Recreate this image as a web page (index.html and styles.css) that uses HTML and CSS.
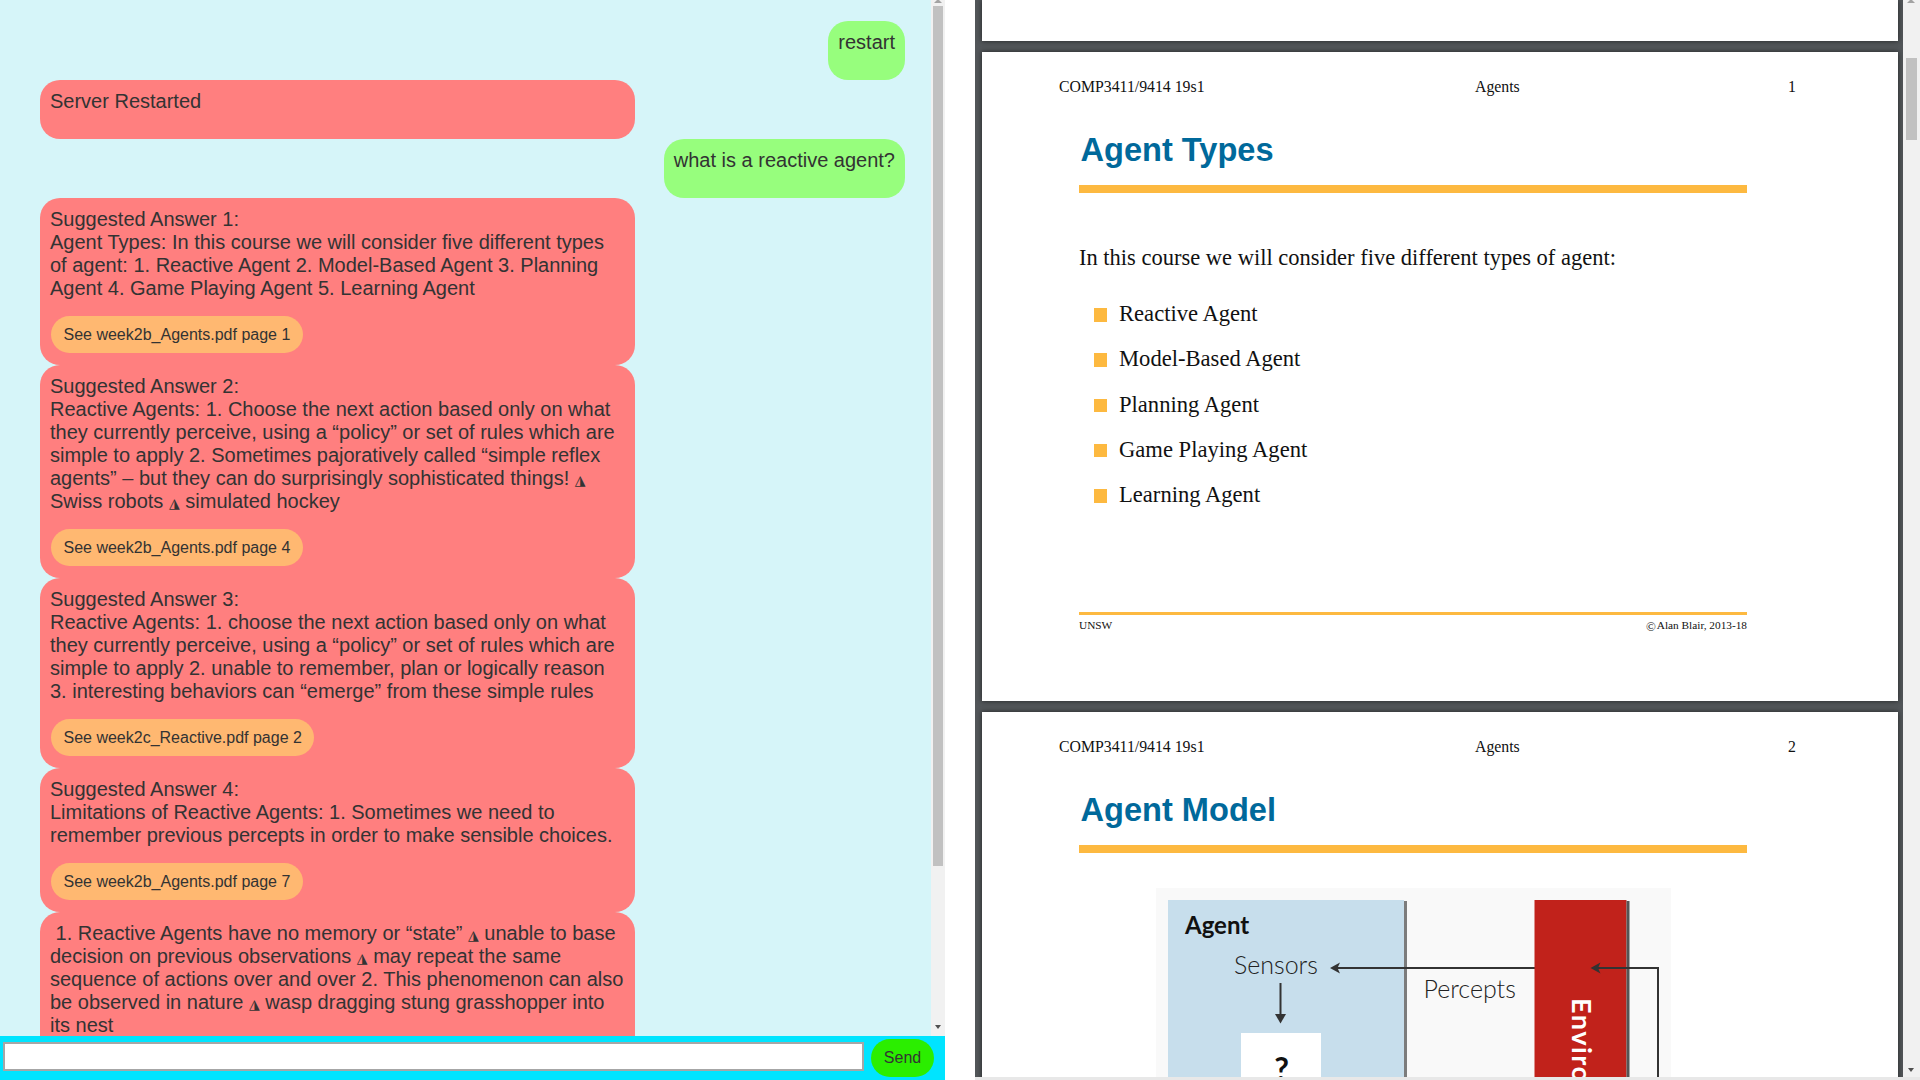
FILE: index.html
```html
<!DOCTYPE html>
<html lang="en">
<head>
<meta charset="utf-8">
<title>Course Chatbot</title>
<link rel="stylesheet" href="styles.css">
</head>
<body>
<div class="app">
  <section class="chat">
    <div class="chat-main">
      <div class="messages">
        <div class="msg user">restart</div>
        <div class="msg bot">Server Restarted</div>
        <div class="msg user">what is a reactive agent?</div>
        <div class="msg bot answer">
          <p>Suggested Answer 1:<br>Agent Types: In this course we will consider five different types of agent: 1. Reactive Agent 2. Model-Based Agent 3. Planning Agent 4. Game Playing Agent 5. Learning Agent</p>
          <button class="doc-btn" type="button">See week2b_Agents.pdf page 1</button>
        </div>
        <div class="msg bot answer">
          <p>Suggested Answer 2:<br>Reactive Agents: 1. Choose the next action based only on what they currently perceive, using a “policy” or set of rules which are simple to apply 2. Sometimes pajoratively called “simple reflex agents” – but they can do surprisingly sophisticated things! <span class="tri">◮</span> Swiss robots <span class="tri">◮</span> simulated hockey</p>
          <button class="doc-btn" type="button">See week2b_Agents.pdf page 4</button>
        </div>
        <div class="msg bot answer">
          <p>Suggested Answer 3:<br>Reactive Agents: 1. choose the next action based only on what they currently perceive, using a “policy” or set of rules which are simple to apply 2. unable to remember, plan or logically reason 3. interesting behaviors can “emerge” from these simple rules</p>
          <button class="doc-btn" type="button">See week2c_Reactive.pdf page 2</button>
        </div>
        <div class="msg bot answer">
          <p>Suggested Answer 4:<br>Limitations of Reactive Agents: 1. Sometimes we need to remember previous percepts in order to make sensible choices.</p>
          <button class="doc-btn" type="button">See week2b_Agents.pdf page 7</button>
        </div>
        <div class="msg bot answer">
          <p>&nbsp;1. Reactive Agents have no memory or “state” <span class="tri">◮</span> unable to base decision on previous observations <span class="tri">◮</span> may repeat the same sequence of actions over and over 2. This phenomenon can also be observed in nature <span class="tri">◮</span> wasp dragging stung grasshopper into its nest</p>
          <button class="doc-btn" type="button">See week2c_Reactive.pdf page 3</button>
        </div>
      </div>
      <div class="vscroll chat-scroll">
        <span class="arrow-up"></span>
        <span class="thumb"></span>
        <span class="arrow-down"></span>
      </div>
    </div>
    <form class="composer">
      <input class="composer-input" type="text" aria-label="Message">
      <button class="send" type="button">Send</button>
    </form>
  </section>

  <div class="divider"></div>

  <section class="viewer">
    <div class="viewer-body">
      <div class="pages">
        <div class="page page-tail"></div>

        <div class="page page-full">
          <div class="page-head">
            <span>COMP3411/9414 19s1</span>
            <span>Agents</span>
            <span class="page-no">1</span>
          </div>
          <h1 class="slide-title">Agent Types</h1>
          <div class="title-rule"></div>
          <p class="intro">In this course we will consider five different types of agent:</p>
          <ul class="bullets">
            <li>Reactive Agent</li>
            <li>Model-Based Agent</li>
            <li>Planning Agent</li>
            <li>Game Playing Agent</li>
            <li>Learning Agent</li>
          </ul>
          <div class="page-foot">
            <div class="foot-rule"></div>
            <div class="foot-text">
              <span>UNSW</span>
              <span><span class="copy">©</span>Alan Blair, 2013-18</span>
            </div>
          </div>
        </div>

        <div class="page page-full">
          <div class="page-head">
            <span>COMP3411/9414 19s1</span>
            <span>Agents</span>
            <span class="page-no">2</span>
          </div>
          <h1 class="slide-title">Agent Model</h1>
          <div class="title-rule"></div>
          <svg class="diagram" width="515" height="220" viewBox="0 0 515 220">
            <rect x="0" y="0" width="515" height="220" fill="#f9f9f9"/>
            <rect x="12" y="12" width="236" height="210" fill="#c7deec"/>
            <rect x="248" y="13" width="3" height="210" fill="#7c7c7c"/>
            <text x="29" y="46" font-family="Lato, 'Open Sans', sans-serif" font-weight="700" font-size="24" fill="#111">Agent</text>
            <text x="78" y="85.5" font-family="Lato, 'Open Sans', sans-serif" font-weight="300" font-size="25" fill="#222">Sensors</text>
            <line x1="181" y1="80" x2="399" y2="80" stroke="#333" stroke-width="2"/>
            <path d="M174 80 L184 74.5 L181.5 80 L184 85.5 Z" fill="#333"/>
            <line x1="124.5" y1="95" x2="124.5" y2="128" stroke="#333" stroke-width="2"/>
            <path d="M119 126 L130 126 L124.5 135.5 Z" fill="#333"/>
            <rect x="85" y="145" width="80" height="80" fill="#ffffff"/>
            <text x="125.5" y="193" text-anchor="middle" font-family="Lato, 'Open Sans', sans-serif" font-weight="700" font-size="32" fill="#111">?</text>
            <text x="267.5" y="110" font-family="Lato, 'Open Sans', sans-serif" font-weight="300" font-size="25" fill="#222">Percepts</text>
            <rect x="378.5" y="12" width="92" height="210" fill="#c1221b"/>
            <rect x="470.5" y="13" width="3" height="210" fill="#555"/>
            <line x1="441" y1="80" x2="503" y2="80" stroke="#333" stroke-width="2"/>
            <path d="M434.5 80 L444.5 74.5 L442 80 L444.5 85.5 Z" fill="#333"/>
            <line x1="502" y1="79" x2="502" y2="220" stroke="#333" stroke-width="2"/>
            <text transform="translate(416 110) rotate(90)" font-family="Lato, 'Open Sans', sans-serif" font-weight="700" font-size="27" letter-spacing="1.5" fill="#ffffff">Environment</text>
          </svg>
        </div>
      </div>
      <div class="vscroll pdf-scroll">
        <span class="arrow-up"></span>
        <span class="thumb"></span>
        <span class="arrow-down"></span>
      </div>
    </div>
    <div class="viewer-strip"></div>
  </section>
</div>
</body>
</html>
```

FILE: styles.css
```css
* { box-sizing: border-box; }

html, body {
  margin: 0;
  height: 100%;
}

body {
  background: #ffffff;
  overflow: hidden;
  font-family: "Liberation Sans", Arial, sans-serif;
}

.app {
  display: flex;
  height: 1080px;
}

/* ---------- chat ---------- */
.chat {
  width: 945px;
  display: flex;
  flex-direction: column;
  flex-shrink: 0;
}

.chat-main {
  height: 1036px;
  display: flex;
  background: #d6f5f9;
}

.messages {
  flex: 1;
  overflow: hidden;
  display: flex;
  flex-direction: column;
  padding-top: 21px;
}

.msg {
  flex-shrink: 0;
  font-size: 20px;
  line-height: 23px;
  color: #333;
  border-radius: 20px;
}

.msg.user {
  align-self: flex-end;
  margin-right: 26px;
  background: #97fe7d;
  padding: 10px 10px 26px;
}

.msg.bot {
  margin-left: 40px;
  width: 595px;
  background: #ff7f7f;
  padding: 10px 10px 26px;
}

.msg.answer {
  padding-bottom: 12px;
  display: flex;
  flex-direction: column;
  align-items: flex-start;
}

.msg.answer p {
  margin: 0 0 16px;
}

.tri {
  font-family: "DejaVu Sans", sans-serif;
  font-size: 14px;
  line-height: 0;
}

.doc-btn {
  height: 37px;
  margin-left: 1px;
  padding: 0 12.5px;
  border: none;
  border-radius: 19px;
  background: #ffb871;
  color: #333;
  font-family: "Liberation Sans", Arial, sans-serif;
  font-size: 16px;
}

.vscroll {
  display: flex;
  flex-direction: column;
  background: #f1f1f1;
  flex-shrink: 0;
}

.chat-scroll {
  width: 14px;
  align-items: center;
}

.arrow-up {
  width: 0;
  height: 0;
  margin-top: -1px;
  border-left: 4px solid transparent;
  border-right: 4px solid transparent;
  border-bottom: 4px solid #a3a3a3;
}

.thumb {
  background: #c1c1c1;
}

.chat-scroll .thumb {
  width: 10px;
  height: 860px;
  margin-top: 3px;
}

.arrow-down {
  width: 0;
  height: 0;
  margin-top: auto;
  border-left: 3.5px solid transparent;
  border-right: 3.5px solid transparent;
  border-top: 4px solid #505050;
}

.chat-scroll .arrow-down {
  margin-bottom: 7px;
}

.composer {
  height: 44px;
  margin: 0;
  background: #00e4ff;
  display: flex;
  align-items: flex-start;
  padding-left: 3px;
}

.composer-input {
  margin-top: 6px;
  width: 861px;
  height: 29px;
  border: 2px solid #a6a6a6;
  background: #fff;
  padding: 0 4px;
}

.send {
  margin: 3px 0 0 7px;
  width: 63px;
  height: 38px;
  border: none;
  border-radius: 19px;
  background: #2bee00;
  color: #333;
  font-family: "Liberation Sans", Arial, sans-serif;
  font-size: 16px;
  padding: 0;
}

.divider {
  width: 30px;
  flex-shrink: 0;
}

/* ---------- pdf viewer ---------- */
.viewer {
  flex: 1;
  display: flex;
  flex-direction: column;
}

.viewer-body {
  height: 1077px;
  display: flex;
  background: #525659;
}

.pages {
  flex: 1;
  overflow: hidden;
  padding: 0 5px 0 7px;
}

.page {
  width: 916px;
  background: #ffffff;
  margin-bottom: 11px;
  box-shadow: 0 0 5px rgba(0, 0, 0, 0.6);
}

.page-tail {
  height: 41px;
}

.page-full {
  height: 649px;
  display: flex;
  flex-direction: column;
  padding-top: 26px;
  font-family: "Liberation Serif", "Times New Roman", serif;
  color: #111;
}

.page-head {
  display: grid;
  grid-template-columns: 416px 1fr auto;
  margin: 0 102px 0 77px;
  font-size: 15.8px;
  line-height: 18px;
}

.slide-title {
  margin: 35px 0 0 98.5px;
  font-family: "Liberation Sans", Arial, sans-serif;
  font-weight: bold;
  font-size: 32.6px;
  line-height: 37px;
  color: #00699b;
}

.title-rule {
  margin: 17px 0 0 97px;
  width: 668px;
  height: 8px;
  background: #fdb940;
  flex-shrink: 0;
}

.intro {
  margin: 52px 0 0 97px;
  font-size: 22.5px;
  line-height: 26px;
}

.bullets {
  list-style: none;
  margin: 30px 0 0 111.5px;
  padding: 0;
  display: flex;
  flex-direction: column;
  gap: 19.3px;
  font-size: 22.6px;
  line-height: 26px;
}

.bullets li {
  display: flex;
  align-items: flex-start;
}

.bullets li::before {
  content: "";
  width: 13.5px;
  height: 13.5px;
  margin: 7px 12px 0 0;
  background: #fdb940;
  flex-shrink: 0;
}

.page-foot {
  margin-top: auto;
  padding-bottom: 69px;
}

.foot-rule {
  margin-left: 97px;
  width: 668px;
  height: 3px;
  background: #fdb940;
}

.foot-text {
  display: flex;
  justify-content: space-between;
  margin: 4px 151px 0 97px;
  font-size: 11.3px;
  line-height: 13px;
}

.copy {
  font-size: 13px;
  line-height: 0;
  vertical-align: -2px;
  margin-right: 1px;
}

.diagram {
  display: block;
  margin: 35px 0 0 174px;
  flex-shrink: 0;
}

.pdf-scroll {
  width: 17px;
  align-items: center;
}

.pdf-scroll .arrow-up {
  margin-left: -1px;
}

.pdf-scroll .thumb {
  width: 11px;
  height: 82px;
  margin-top: 55px;
  margin-right: 1px;
}

.pdf-scroll .arrow-down {
  margin-bottom: 5px;
  margin-right: 1px;
}

.viewer-strip {
  height: 3px;
  background: #e8e8e8;
}
```
